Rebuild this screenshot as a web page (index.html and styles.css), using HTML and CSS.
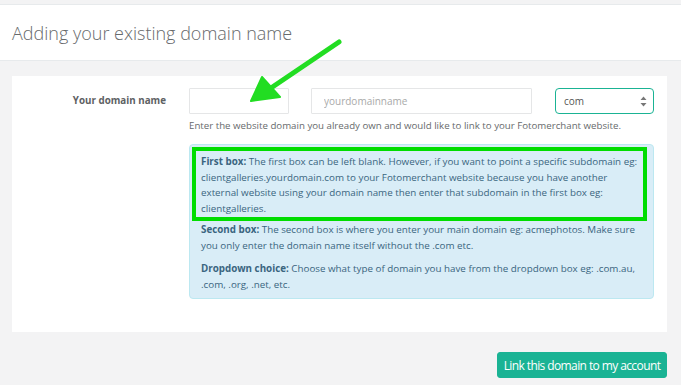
FILE: index.html
```html
<!DOCTYPE html>
<html>
<head>
<meta charset="utf-8">
<link rel="stylesheet" href="styles.css">
</head>
<body>
<div class="page">
  <div class="topstrip"></div>
  <header class="head">
    <h1 class="title">Adding your existing domain name</h1>
  </header>
  <section class="panel">
    <div class="row">
      <label class="label">Your domain name</label>
      <div class="fields">
        <div class="inputs">
          <input class="input input-sub" type="text">
          <input class="input input-main" type="text" placeholder="yourdomainname">
          <div class="select">
            <span class="select-val">com</span>
            <svg class="select-arrows" width="7" height="11" viewBox="0 0 7 11"><path d="M3.5 0.5 L6.5 4 H0.5 Z M3.5 10.5 L6.5 7 H0.5 Z" fill="#777"/></svg>
          </div>
        </div>
        <p class="help">Enter the website domain you already own and would like to link to your Fotomerchant website.</p>
        <div class="info">
          <div class="highlight">
            <p class="para"><b>First box:</b> The first box can be left blank. However, if you want to point a specific subdomain eg: clientgalleries.yourdomain.com to your Fotomerchant website because you have another external website using your domain name then enter that subdomain in the first box eg: clientgalleries.</p>
          </div>
          <p class="para para-second"><b>Second box:</b> The second box is where you enter your main domain eg: acmephotos. Make sure you only enter the domain name itself without the .com etc.</p>
          <p class="para para-gap"><b>Dropdown choice:</b> Choose what type of domain you have from the dropdown box eg: .com.au, .com, .org, .net, etc.</p>
        </div>
      </div>
    </div>
  </section>
  <div class="actions">
    <button class="btn">Link this domain to my account</button>
  </div>
  <svg class="arrow" width="681" height="385" viewBox="0 0 681 385">
    <line x1="339" y1="42" x2="268" y2="90" stroke="#22dd22" stroke-width="5" stroke-linecap="round"/>
    <path d="M251 101 L262 77 L280 97 Z" fill="#22dd22" stroke="#22dd22" stroke-width="2" stroke-linejoin="round"/>
  </svg>
</div>
</body>
</html>
```

FILE: styles.css
```css
* { box-sizing: border-box; }
html, body { margin: 0; padding: 0; }
body {
  background: #f3f3f4;
  font-family: "Open Sans", "Liberation Sans", sans-serif;
  color: #676a6c;
  width: 681px;
  height: 385px;
  overflow: hidden;
}
.page { position: relative; height: 385px; }
.topstrip { height: 4px; }
.head {
  background: #fff;
  border-top: 1px solid #e7eaec;
  border-bottom: 1px solid #e7eaec;
  height: 57px;
  padding: 0 12px;
  display: flex;
  align-items: center;
}
.title {
  margin: 0;
  font-size: 18px;
  font-weight: 300;
  color: #676a6c;
}
.panel {
  background: #fff;
  margin: 15px 14px 0 12px;
  height: 256px;
  padding-top: 12px;
}
.row { display: flex; }
.label {
  width: 154px;
  text-align: right;
  font-size: 9.8px;
  font-weight: 700;
  line-height: 26px;
  margin-right: 23px;
  color: #5e6163;
}
.fields { width: 465px; }
.inputs { display: flex; align-items: center; }
.input {
  height: 26px;
  border: 1px solid #e5e6e7;
  border-radius: 1px;
  font-family: inherit;
  font-size: 10px;
  padding: 0 12px;
  color: #676a6c;
  outline: none;
  background: #fff;
}
.input::placeholder { color: #a9a9a9; }
.input-sub { width: 100px; margin-right: 22px; }
.input-main { width: 221px; margin-right: 23px; }
.select {
  width: 99px;
  height: 26px;
  border: 1px solid #1ab394;
  border-radius: 4px;
  display: flex;
  align-items: center;
  justify-content: space-between;
  padding: 0 6px 0 8px;
  font-size: 10px;
  color: #555;
}
.select-arrows { display: block; }
.help {
  margin: 5px 0 0;
  font-size: 9.7px;
  line-height: 14px;
}
.info {
  margin-top: 11px;
  background: #d9edf7;
  border: 1px solid #bce8f1;
  border-radius: 4px;
  padding: 11px 12px 13px 11px;
  color: #3a6580;
  height: 155px;
}
.highlight {
  margin: -9px -6px 0 -9px;
  border: 4px solid #00dd00;
  padding: 3px 3px 1px 5px;
}
.para {
  margin: 0;
  font-size: 9.8px;
  line-height: 15.5px;
}
.para b { font-weight: 700; }
.para-second { margin-top: 1px; }
.para-gap { margin-top: 8px; }
.actions {
  display: flex;
  justify-content: flex-end;
  margin: 20px 14px 0 0;
}
.btn {
  background: #1ab394;
  border: 1px solid #1ab394;
  border-radius: 3px;
  color: #fff;
  font-family: "Open Sans", sans-serif;
  font-size: 12px;
  letter-spacing: -0.6px;
  height: 26px;
  width: 170px;
  padding: 0;
}
.arrow {
  position: absolute;
  left: 0;
  top: 0;
  pointer-events: none;
}
```
